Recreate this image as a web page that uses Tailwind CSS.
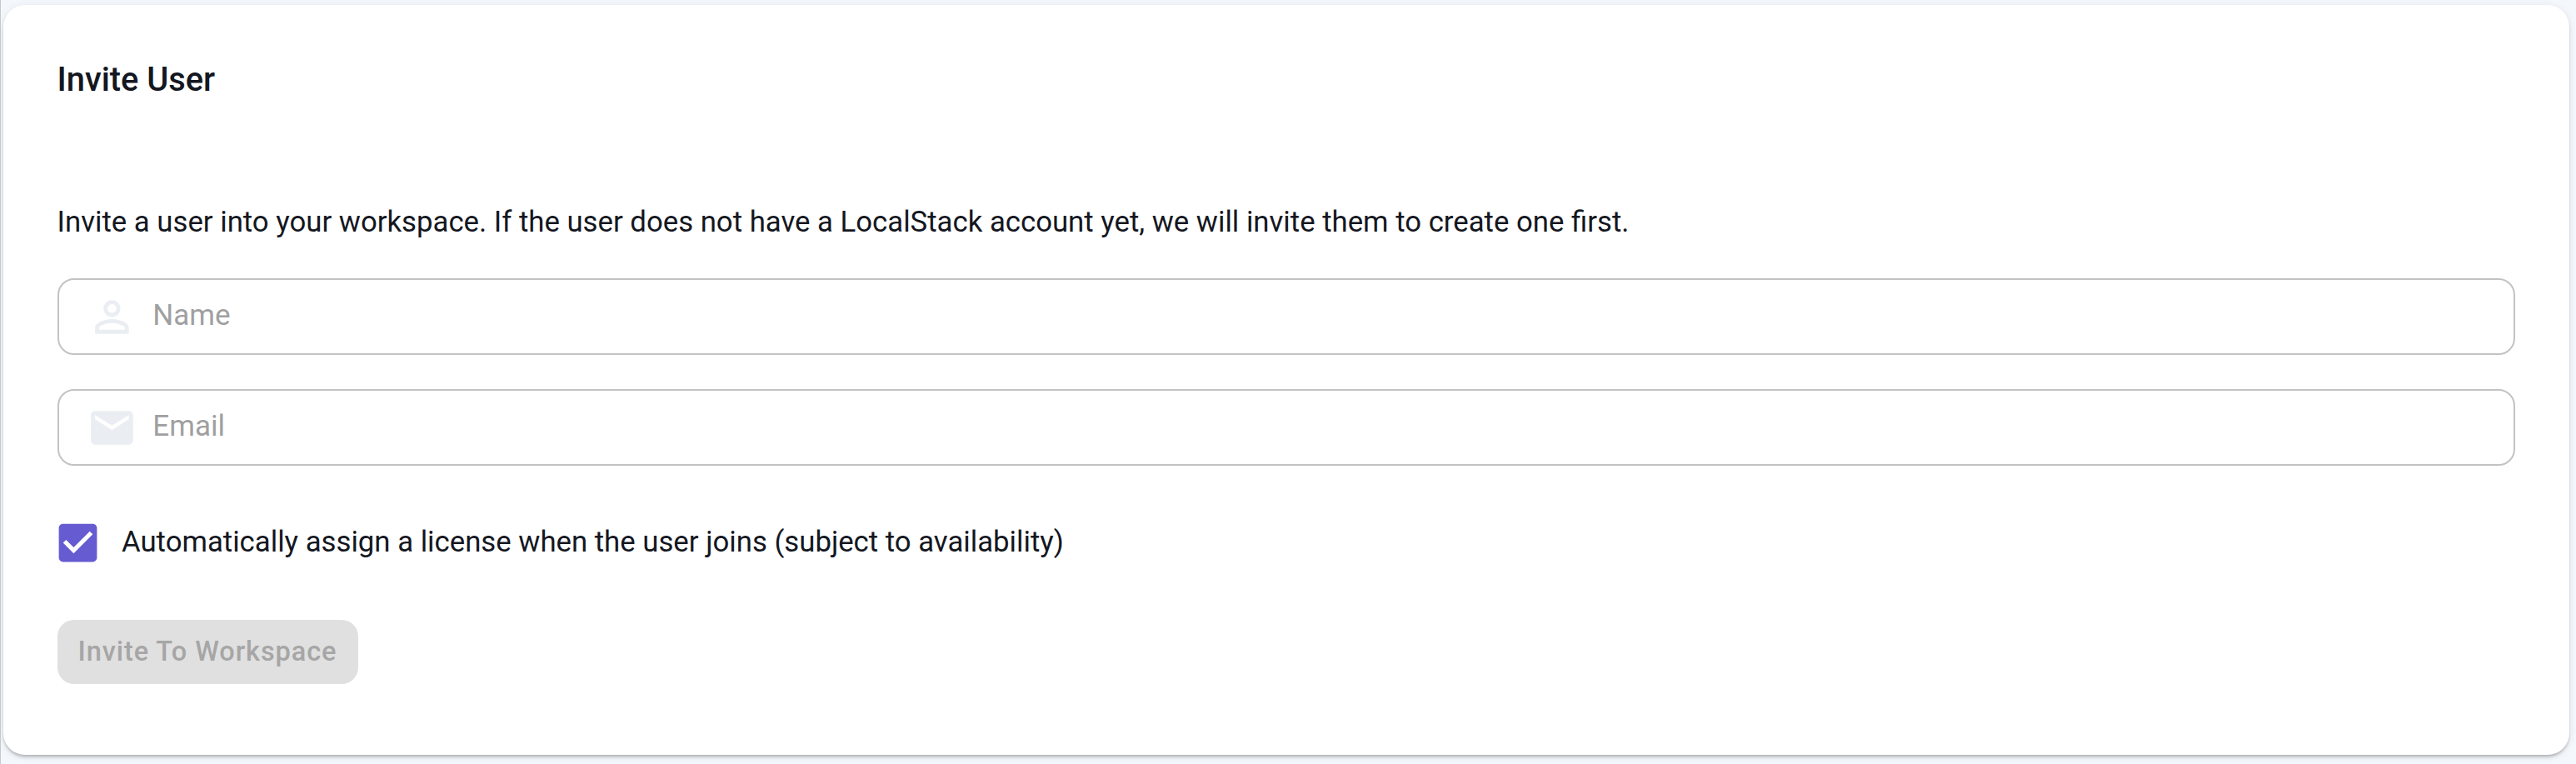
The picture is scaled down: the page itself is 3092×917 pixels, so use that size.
<!DOCTYPE html>
<html lang="en">
<head>
<meta charset="utf-8">
<title>Invite User</title>
<script src="https://cdn.jsdelivr.net/npm/@tailwindcss/browser@4"></script>
</head>
<body class="h-[917px] overflow-hidden border-l border-[#c6c8cb] bg-[#f4f8fc] pt-[6px] pr-[8px] pl-[3px] font-['Roboto',sans-serif] text-[34.74px] leading-[52px] text-[#14171f]">
  <main class="flex h-[900px] flex-col items-start rounded-[26px] bg-white pt-[66px] pr-[65px] pl-[64.5px] shadow-[0_4px_4px_-2px_rgba(0,0,0,0.16),0_2px_3px_0_rgba(0,0,0,0.1),0_2px_10px_0_rgba(0,0,0,0.1)]">
    <h1 class="text-[39.8px] leading-[48px] font-medium">Invite User</h1>
    <p class="mt-[120px] whitespace-nowrap">Invite a user into your workspace. If the user does not have a LocalStack account yet, we will invite them to create one first.</p>
    <label class="mt-[42px] flex h-[92px] w-full items-center rounded-[20px] border-2 border-[#c3c3c3] pl-[33px]">
      <svg class="size-[60.8px] shrink-0 text-[#eaeef2]" viewBox="0 0 24 24" fill="currentColor"><path d="M12 5.9c1.16 0 2.1.94 2.1 2.1s-.94 2.1-2.1 2.1S9.9 9.16 9.9 8s.94-2.1 2.1-2.1m0 9c2.97 0 6.1 1.46 6.1 2.1v1.1H5.9V17c0-.64 3.13-2.1 6.1-2.1M12 4C9.79 4 8 5.79 8 8s1.79 4 4 4 4-1.79 4-4-1.79-4-4-4zm0 9c-2.67 0-8 1.34-8 4v3h16v-3c0-2.66-5.33-4-8-4z"/></svg>
      <input type="text" placeholder="Name" class="mb-[2px] ml-[19px] h-[52px] grow bg-transparent text-[35px] outline-none placeholder:text-[#a0a0a1]">
    </label>
    <label class="mt-[41px] flex h-[92px] w-full items-center rounded-[20px] border-2 border-[#c3c3c3] pl-[33px]">
      <svg class="size-[60.8px] shrink-0 text-[#eaeef2]" viewBox="0 0 24 24" fill="currentColor"><path d="M20 4H4c-1.1 0-1.99.9-1.99 2L2 18c0 1.1.9 2 2 2h16c1.1 0 2-.9 2-2V6c0-1.1-.9-2-2-2zm0 4l-8 5-8-5V6l8 5 8-5v2z"/></svg>
      <input type="email" placeholder="Email" class="mb-[2px] ml-[19px] h-[52px] grow bg-transparent text-[35px] outline-none placeholder:text-[#a0a0a1]">
    </label>
    <div class="mt-[62px] -ml-[5.5px] flex h-[61px] items-center gap-[22px]">
      <svg class="size-[61px] shrink-0 text-[#675bd2]" viewBox="0 0 24 24" fill="currentColor"><path d="M19 3H5c-1.11 0-2 .9-2 2v14c0 1.1.89 2 2 2h14c1.11 0 2-.9 2-2V5c0-1.1-.89-2-2-2zm-9 14l-5-5 1.41-1.41L10 14.17l7.59-7.59L19 8l-9 9z"/></svg>
      <span class="mb-[3px] whitespace-nowrap">Automatically assign a license when the user joins (subject to availability)</span>
    </div>
    <button disabled class="mt-[62px] flex h-[77px] w-[361px] items-center justify-center rounded-[20px] bg-[#e0e0e0] pb-px text-[32.5px] font-medium tracking-[0.93px] whitespace-nowrap text-[#a6a6a6]">Invite To Workspace</button>
  </main>
</body>
</html>
